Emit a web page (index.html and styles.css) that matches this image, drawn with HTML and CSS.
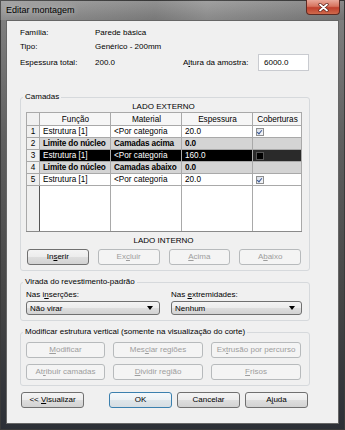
FILE: index.html
```html
<!DOCTYPE html>
<html lang="pt">
<head>
    <meta charset="UTF-8">
    <title>Editar montagem</title>
    <link rel="stylesheet" href="styles.css">
</head>
<body>
    <div class="window">
        <div class="titlebar">
            <span class="title">Editar montagem</span>
            <span class="close">
                <svg width="11" height="9" viewBox="0 0 11 9">
                    <path d="M2 1.5 L9 7.5 M9 1.5 L2 7.5" stroke="#5a1f17" stroke-width="3.2" stroke-linecap="round"/>
                    <path d="M2 1.5 L9 7.5 M9 1.5 L2 7.5" stroke="#fff" stroke-width="1.8" stroke-linecap="round"/>
                </svg>
            </span>
        </div>

        <div class="client">
            <div class="info">
                <span>Família:</span><span>Parede básica</span><span></span><span></span>
                <span>Tipo:</span><span>Genérico - 200mm</span><span></span><span></span>
                <span>Espessura total:</span><span>200.0</span>
                <span>A<u>l</u>tura da amostra:</span>
                <span class="input">6000.0</span>
            </div>

            <fieldset class="group">
                <legend>Camadas</legend>
                <div class="side">LADO EXTERNO</div>
                <table class="layers">
                    <colgroup>
                        <col class="c-num"><col class="c-fn"><col class="c-mat"><col class="c-th"><col class="c-cov">
                    </colgroup>
                    <thead>
                        <tr><th></th><th>Função</th><th>Material</th><th>Espessura</th><th>Coberturas</th></tr>
                    </thead>
                    <tbody>
                        <tr>
                            <td class="num">1</td><td>Estrutura [1]</td><td>&lt;Por categoria</td><td>20.0</td>
                            <td><span class="check on"></span></td>
                        </tr>
                        <tr class="core">
                            <td class="num">2</td><td>Limite do núcleo</td><td>Camadas acima</td><td>0.0</td><td></td>
                        </tr>
                        <tr class="selected">
                            <td class="num">3</td><td>Estrutura [1]</td><td>&lt;Por categoria</td><td>160.0</td>
                            <td class="dark"><span class="check off"></span></td>
                        </tr>
                        <tr class="core">
                            <td class="num">4</td><td>Limite do núcleo</td><td>Camadas abaixo</td><td>0.0</td><td></td>
                        </tr>
                        <tr>
                            <td class="num">5</td><td>Estrutura [1]</td><td>&lt;Por categoria</td><td>20.0</td>
                            <td><span class="check on"></span></td>
                        </tr>
                        <tr class="filler">
                            <td class="num"></td><td></td><td></td><td></td><td></td>
                        </tr>
                    </tbody>
                </table>
                <div class="side lower">LADO INTERNO</div>
                <div class="layer-buttons">
                    <span class="btn">In<u>s</u>erir</span>
                    <span class="btn disabled">Ex<u>c</u>luir</span>
                    <span class="btn disabled"><u>A</u>cima</span>
                    <span class="btn disabled">A<u>b</u>aixo</span>
                </div>
            </fieldset>

            <fieldset class="group">
                <legend>Virada do revestimento-padrão</legend>
                <div class="wrap-row">
                    <div class="field">
                        <span>Nas i<u>n</u>serções:</span>
                        <span class="combo">Não virar<i class="arrow"></i></span>
                    </div>
                    <div class="field">
                        <span>Nas <u>e</u>xtremidades:</span>
                        <span class="combo">Nenhum<i class="arrow"></i></span>
                    </div>
                </div>
            </fieldset>

            <fieldset class="group">
                <legend>Modificar estrutura vertical (somente na visualização do corte)</legend>
                <div class="vert-buttons">
                    <span class="btn disabled"><u>M</u>odificar</span>
                    <span class="btn disabled">Mes<u>c</u>lar regiões</span>
                    <span class="btn disabled">Ex<u>t</u>rusão por percurso</span>
                    <span class="btn disabled">At<u>r</u>ibuir camadas</span>
                    <span class="btn disabled"><u>D</u>ividir região</span>
                    <span class="btn disabled"><u>F</u>risos</span>
                </div>
            </fieldset>

            <div class="footer">
                <span class="btn">&lt;&lt; <u>V</u>isualizar</span>
                <span class="btn default">OK</span>
                <span class="btn">Cancelar</span>
                <span class="btn">A<u>j</u>uda</span>
            </div>
        </div>
    </div>
</body>
</html>
```

FILE: styles.css
```css
body {
    margin: 0;
    font-family: 'Liberation Sans', Arial, sans-serif;
    font-size: 8px;
    color: #000;
}
.window {
    width: 345px;
    height: 430px;
    box-sizing: border-box;
    display: flex;
    flex-direction: column;
    padding: 0 6px 6px;
    background: linear-gradient(180deg, #9a9a9a 0, #7e7e7e 20px, #5f5f5f 140px, #454545 300px, #2c2f36 100%);
    box-shadow: inset 0 0 0 1px #3a3a3a;
}
.titlebar {
    height: 20px;
    display: flex;
    justify-content: space-between;
    align-items: center;
    background: linear-gradient(90deg, rgba(255,255,255,0.12), rgba(0,0,0,0.05) 45%, rgba(255,255,255,0.08) 60%, rgba(0,0,0,0.1));
    margin: 0 -6px;
    padding: 0 5px 0 6px;
}
.title {
    font-size: 9px;
    text-shadow: 0 0 6px rgba(255, 255, 255, 0.7);
}
.close {
    align-self: flex-start;
    width: 34px;
    height: 15px;
    box-sizing: border-box;
    display: flex;
    justify-content: center;
    align-items: center;
    border: 1px solid #5e2a22;
    border-top: none;
    border-radius: 0 0 4px 4px;
    background: linear-gradient(180deg, #e9a89a 0, #d7745f 45%, #c0402d 55%, #cf6a4c 100%);
}
.client {
    flex: 1;
    background: #f0f0f0;
    border: 1px solid #666;
    padding: 4px 28px 0 13px;
    display: flex;
    flex-direction: column;
}
.info {
    display: grid;
    grid-template-columns: 75px 88px 75px 51px;
    grid-template-rows: 14px 15px 17px;
    align-items: center;
}
.input {
    height: 17px;
    box-sizing: border-box;
    background: #fff;
    border: 1px solid #c9cbd0;
    padding-left: 5px;
    display: flex;
    align-items: center;
}
.group {
    margin: 6px 0 0;
    padding: 0 8px 5px 5px;
    border: 1px solid #d6d9dc;
    border-radius: 3px;
    min-width: 0;
}
.group:first-of-type {
    margin-top: 21px;
}
.group legend {
    padding: 0 2px;
    margin-left: -3px;
    line-height: 10px;
}
.side {
    text-align: center;
    line-height: 10px;
}
.side.lower {
    margin-top: 4px;
}
.layers {
    width: 275px;
    table-layout: fixed;
    border-collapse: collapse;
    border: 1px solid #8a8a8a;
    font-size: 8.2px;
    background: #fff;
}
.c-num { width: 13px; }
.c-fn, .c-mat, .c-th { width: 71px; }
.c-cov { width: 49px; }
.layers th, .layers td {
    border: 1px solid #a9a9a9;
    height: 11px;
    padding: 0 2px 0 3px;
    white-space: nowrap;
    overflow: hidden;
    line-height: 11px;
}
.layers th {
    height: 12px;
    font-weight: normal;
    background: #f6f6f6;
    text-align: center;
}
.layers th:first-child, .layers .num {
    background: #f0f0f0;
    text-align: center;
    padding: 0;
}
.layers .core td {
    background: #d4d4d4;
    font-weight: bold;
    letter-spacing: -0.15px;
}
.layers .selected td {
    background: #000;
    color: #fff;
}
.layers .core td.num, .layers .selected td.num {
    background: #f0f0f0;
    color: #000;
    font-weight: normal;
    letter-spacing: 0;
}
.layers .selected td.dark {
    background: #2a2a2a;
}
.layers .filler td {
    height: 45px;
    border-bottom-color: #8a8a8a;
}
.layers .filler td.num {
    border-right-color: #555;
}
.check {
    display: inline-block;
    width: 8px;
    height: 8px;
    margin-top: 2px;
    vertical-align: top;
    box-sizing: border-box;
    border: 1px solid #8e8f8f;
}
.check.on {
    background: linear-gradient(135deg, #d8dde6, #f8f9fb);
    position: relative;
}
.check.on::after {
    content: '';
    position: absolute;
    left: 1px;
    top: 0;
    width: 2px;
    height: 4px;
    border: solid #3a5896;
    border-width: 0 1.5px 1.5px 0;
    transform: rotate(40deg);
}
.check.off {
    background: #000;
    border-color: #555;
}
.layer-buttons {
    display: flex;
    gap: 9px;
    margin: 3px 0 0 1px;
}
.layer-buttons .btn {
    width: 62px;
}
.btn {
    height: 16px;
    box-sizing: border-box;
    display: block;
    text-align: center;
    line-height: 14px;
    border: 1px solid #707070;
    border-radius: 3px;
    background: linear-gradient(180deg, #f4f4f4 0, #ececec 50%, #dedede 51%, #d2d2d2 100%);
    white-space: nowrap;
}
.btn.disabled {
    border-color: #b7babc;
    background: #f4f4f4;
    color: #9d9d9d;
}
.btn.default {
    border-color: #3b80ae;
    background: linear-gradient(180deg, #f4f8fb 0, #ecf1f4 50%, #dfe6ea 51%, #d6dde2 100%);
}
.wrap-row {
    display: grid;
    grid-template-columns: 134px 131px;
    column-gap: 11px;
    padding-top: 3px;
}
.field {
    display: flex;
    flex-direction: column;
    gap: 1px;
}
.field > span:first-child {
    line-height: 10px;
}
.combo {
    height: 14px;
    box-sizing: border-box;
    display: flex;
    align-items: center;
    justify-content: space-between;
    padding: 0 6px 0 3px;
    border: 1px solid #707070;
    border-radius: 3px;
    background: linear-gradient(180deg, #f4f4f4 0, #ececec 50%, #dedede 51%, #d2d2d2 100%);
}
.arrow {
    width: 0;
    height: 0;
    border-left: 3px solid transparent;
    border-right: 3px solid transparent;
    border-top: 4px solid #000;
}
.vert-buttons {
    display: grid;
    grid-template-columns: 79px 90px 90px;
    column-gap: 8px;
    row-gap: 6px;
    padding-top: 5px;
}
.footer {
    display: flex;
    gap: 5px;
    margin: 6px 0 0 1px;
}
.footer .btn {
    width: 63px;
}
.footer .btn:first-child {
    margin-right: 20px;
}
```
